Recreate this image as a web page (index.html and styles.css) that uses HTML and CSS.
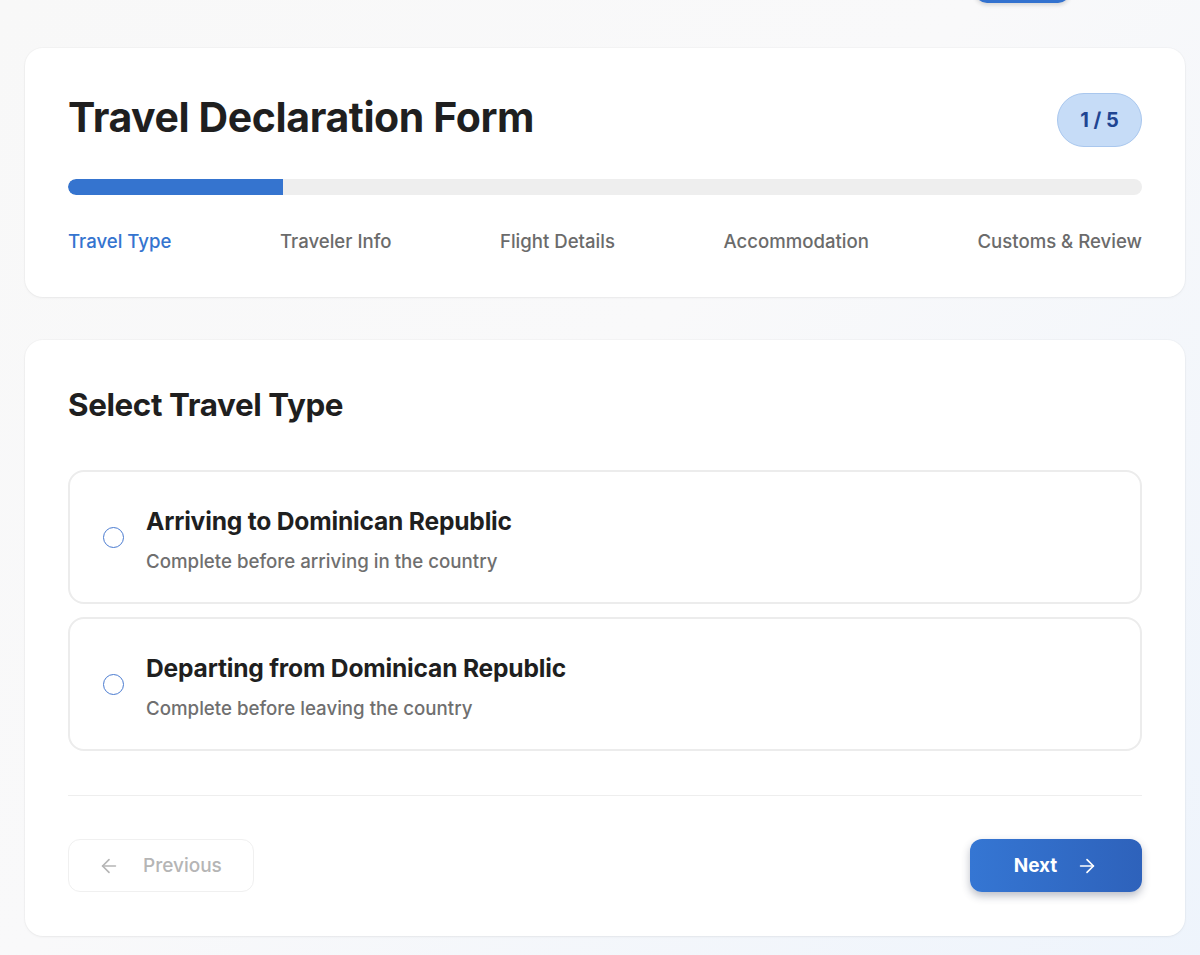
FILE: index.html
```html
<!DOCTYPE html>
<html>
<head>
<meta charset="utf-8">
<link rel="stylesheet" href="styles.css">
</head>
<body>
<div class="page">
  <div class="topbar"><button class="top-btn" aria-label="Save"></button></div>
  <section class="card header-card">
    <div class="header-row">
      <h1 class="title">Travel Declaration Form</h1>
      <span class="badge">1 / 5</span>
    </div>
    <div class="progress"><div class="progress-fill" style="width:20%"></div></div>
    <div class="steps">
      <span class="step active">Travel Type</span>
      <span class="step">Traveler Info</span>
      <span class="step">Flight Details</span>
      <span class="step">Accommodation</span>
      <span class="step">Customs &amp; Review</span>
    </div>
  </section>
  <section class="card form-card">
    <h2 class="section-title">Select Travel Type</h2>
    <div class="options">
      <label class="option">
        <span class="radio"></span>
        <span class="option-text">
          <span class="option-title">Arriving to Dominican Republic</span>
          <span class="option-sub">Complete before arriving in the country</span>
        </span>
      </label>
      <label class="option">
        <span class="radio"></span>
        <span class="option-text">
          <span class="option-title">Departing from Dominican Republic</span>
          <span class="option-sub">Complete before leaving the country</span>
        </span>
      </label>
    </div>
    <div class="divider"></div>
    <div class="nav">
      <button class="btn btn-prev">
        <svg width="22" height="22" viewBox="0 0 24 24" fill="none" stroke="currentColor" stroke-width="1.8" stroke-linecap="round" stroke-linejoin="round"><path d="M19 12H5"/><path d="M12 19l-7-7 7-7"/></svg>
        <span>Previous</span>
      </button>
      <button class="btn btn-next">
        <span>Next</span>
        <svg width="22" height="22" viewBox="0 0 24 24" fill="none" stroke="currentColor" stroke-width="1.8" stroke-linecap="round" stroke-linejoin="round"><path d="M5 12h14"/><path d="M12 5l7 7-7 7"/></svg>
      </button>
    </div>
  </section>
</div>
</body>
</html>
```
FILE: styles.css
```css
* { box-sizing: border-box; }
html, body { margin: 0; padding: 0; }
body {
  font-family: Inter, "Noto Sans", "Liberation Sans", sans-serif;
  background: linear-gradient(135deg, #f8f8f8 0%, #f9f9fa 45%, #eef4fc 100%);
  min-height: 955px;
  color: #1f1f1f;
  overflow: hidden;
}
.page {
  width: 1160px;
  margin-left: 25px;
  padding-bottom: 40px;
}
.topbar {
  display: flex;
  justify-content: flex-end;
  padding-right: 115px;
  margin-top: -37px;
  margin-bottom: 45px;
}
.top-btn {
  width: 95px;
  height: 40px;
  border: none;
  border-radius: 12px;
  background: #3372cf;
  box-shadow: 0 2px 4px rgba(0,0,0,0.15);
}
.card {
  background: #fff;
  border-radius: 18px;
  box-shadow: 0 1px 3px rgba(0,0,0,0.05), 0 0 0 1px rgba(0,0,0,0.02);
}
.header-card {
  padding: 45px 43px 44px;
  margin-bottom: 43px;
}
.header-row {
  display: flex;
  justify-content: space-between;
  align-items: center;
  height: 54px;
}
.title {
  margin: -7px 0 0;
  font-size: 41px;
  font-weight: 700;
  letter-spacing: -0.4px;
  line-height: 50px;
  color: #1f1f1f;
}
.badge {
  display: inline-flex;
  align-items: center;
  justify-content: center;
  width: 85px;
  height: 54px;
  border-radius: 27px;
  background: #c6dcf7;
  border: 1px solid #a9c7ee;
  color: #1f4592;
  font-size: 20px;
  font-weight: 700;
}
.progress {
  margin-top: 32px;
  height: 16px;
  border-radius: 8px;
  background: #eeeeee;
  overflow: hidden;
}
.progress-fill {
  height: 100%;
  background: #3574cf;
  border-radius: 8px 0 0 8px;
}
.steps {
  margin-top: 34px;
  display: flex;
  justify-content: space-between;
  line-height: 24px;
}
.step {
  font-size: 18.6px;
  font-weight: 500;
  color: #6b6b6b;
}
.step.active { color: #3574cf; }
.form-card {
  padding: 46px 43px 44px;
}
.section-title {
  margin: 0 0 46px;
  font-size: 31.4px;
  font-weight: 700;
  letter-spacing: -0.4px;
  line-height: 38px;
  color: #1f1f1f;
}
.options {
  display: flex;
  flex-direction: column;
  gap: 13px;
}
.option {
  display: flex;
  align-items: center;
  height: 134px;
  padding: 0 33px;
  border: 2px solid #ececec;
  border-radius: 16px;
  cursor: pointer;
}
.radio {
  width: 21px;
  height: 21px;
  border-radius: 50%;
  border: 1px solid #4a7bd0;
  flex: none;
  margin-right: 22px;
}
.option-text {
  display: flex;
  flex-direction: column;
  gap: 14px;
  margin-top: 6px;
}
.option-title {
  font-size: 24.6px;
  font-weight: 700;
  line-height: 30px;
  color: #1f1f1f;
  letter-spacing: -0.2px;
}
.option-sub {
  font-size: 18.7px;
  font-weight: 500;
  line-height: 24px;
  color: #6f6f6f;
}
.divider {
  margin-top: 44px;
  height: 1px;
  background: #eeeeee;
  margin-bottom: 43px;
}
.nav {
  display: flex;
  justify-content: space-between;
  align-items: center;
}
.btn {
  display: inline-flex;
  align-items: center;
  height: 53px;
  border-radius: 12px;
  font-family: inherit;
  font-size: 19px;
  cursor: pointer;
}
.btn-prev {
  width: 186px;
  padding: 0 0 0 29px;
  gap: 23px;
  background: #fff;
  border: 1px solid #f0f0f0;
  color: #b5b5b5;
  font-weight: 500;
}
.btn-next {
  width: 172px;
  justify-content: center;
  gap: 19px;
  padding: 0;
  border: none;
  background: linear-gradient(90deg, #3576d3 0%, #2e62bb 100%);
  color: #fff;
  font-weight: 700;
  box-shadow: 0 4px 8px rgba(30, 40, 70, 0.3);
}
```
